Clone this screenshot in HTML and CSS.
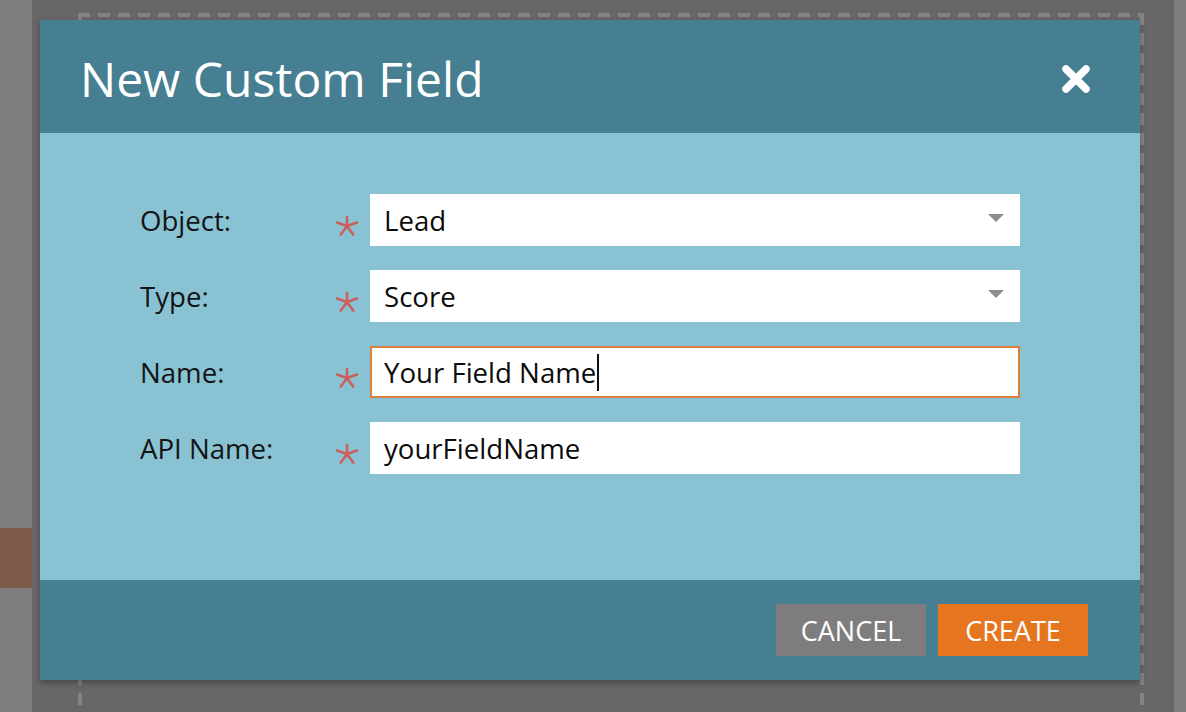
FILE: index.html
```html
<!DOCTYPE html>
<html lang="en">
<head>
<meta charset="utf-8">
<title>New Custom Field</title>
<link rel="stylesheet" href="styles.css">
</head>
<body>
<div class="page">
  <aside class="sidebar"><div class="sidebar-mark"></div></aside>
  <main class="canvas"><div class="frame"></div></main>
  <aside class="rightbar"></aside>
</div>

<div class="modal" role="dialog" aria-labelledby="dlg-title">
  <header class="modal-header">
    <h1 id="dlg-title" class="modal-title">New Custom Field</h1>
    <button class="close" aria-label="Close">
      <svg width="30" height="30" viewBox="0 0 30 30"><path d="M5 5 L25 25 M25 5 L5 25" stroke="#fff" stroke-width="7.5" stroke-linecap="round"/></svg>
    </button>
  </header>
  <section class="modal-body">
    <div class="form">
      <div class="label">Object:</div>
      <div class="req"><svg class="star" width="24" height="22" viewBox="0 0 24 22"><path d="M12 2 V11 M12 11 L22 7.6 M12 11 L2 7.6 M12 11 L18.2 19.6 M12 11 L5.8 19.6" stroke="#c9605e" stroke-width="2.6" stroke-linecap="round"/></svg></div>
      <div class="field select">Lead<span class="caret"></span></div>

      <div class="label">Type:</div>
      <div class="req"><svg class="star" width="24" height="22" viewBox="0 0 24 22"><path d="M12 2 V11 M12 11 L22 7.6 M12 11 L2 7.6 M12 11 L18.2 19.6 M12 11 L5.8 19.6" stroke="#c9605e" stroke-width="2.6" stroke-linecap="round"/></svg></div>
      <div class="field select">Score<span class="caret"></span></div>

      <div class="label">Name:</div>
      <div class="req"><svg class="star" width="24" height="22" viewBox="0 0 24 22"><path d="M12 2 V11 M12 11 L22 7.6 M12 11 L2 7.6 M12 11 L18.2 19.6 M12 11 L5.8 19.6" stroke="#c9605e" stroke-width="2.6" stroke-linecap="round"/></svg></div>
      <div class="field focused"><span class="typed">Your Field Name</span><span class="cursor"></span></div>

      <div class="label">API Name:</div>
      <div class="req"><svg class="star" width="24" height="22" viewBox="0 0 24 22"><path d="M12 2 V11 M12 11 L22 7.6 M12 11 L2 7.6 M12 11 L18.2 19.6 M12 11 L5.8 19.6" stroke="#c9605e" stroke-width="2.6" stroke-linecap="round"/></svg></div>
      <div class="field">yourFieldName</div>
    </div>
  </section>
  <footer class="modal-footer">
    <button class="btn btn-cancel">CANCEL</button>
    <button class="btn btn-create">CREATE</button>
  </footer>
</div>
</body>
</html>
```

FILE: styles.css
```css
* { box-sizing: border-box; }

html, body {
  margin: 0;
  padding: 0;
  width: 1186px;
  height: 712px;
  overflow: hidden;
  background: #686668;
  font-family: "Open Sans", "Noto Sans", sans-serif;
}

.page {
  display: flex;
  height: 712px;
}

.sidebar {
  width: 32px;
  flex: none;
  background: #7f7e7f;
  padding-top: 528px;
}

.sidebar-mark {
  height: 60px;
  background: #7e5a4b;
}

.canvas {
  flex: 1;
  padding: 13px 30px 0 46px;
}

.frame {
  height: 100%;
  background:
    repeating-linear-gradient(90deg, #858385 0 12px, transparent 12px 20px) left top / 100% 4px no-repeat,
    repeating-linear-gradient(180deg, #858385 0 12px, transparent 12px 20px) left top / 4px 100% no-repeat,
    repeating-linear-gradient(180deg, #858385 0 12px, transparent 12px 20px) right top / 4px 100% no-repeat;
}

.rightbar {
  width: 12px;
  flex: none;
  background: #7f7e7f;
}

/* Modal overlay */
.modal {
  position: absolute;
  left: 40px;
  top: 20px;
  width: 1100px;
  display: flex;
  flex-direction: column;
  box-shadow: 0 3px 6px rgba(0, 0, 0, 0.3);
}

.modal-header {
  height: 113px;
  background: #467f92;
  display: flex;
  align-items: center;
  justify-content: space-between;
  padding: 5px 49px 0 40px;
}

.modal-title {
  margin: 0;
  font-weight: 400;
  font-size: 48px;
  line-height: 48px;
  color: #ffffff;
}

.close {
  border: 0;
  padding: 0;
  margin-top: 0;
  background: transparent;
  width: 30px;
  height: 30px;
  display: flex;
}

.modal-body {
  height: 447px;
  background: #89c3d3;
  padding: 61px 0 0 100px;
}

.form {
  display: grid;
  grid-template-columns: 195px 35px 650px;
  grid-auto-rows: 52px;
  row-gap: 24px;
  align-items: center;
}

.label {
  font-size: 27.6px;
  color: #141414;
}

.req {
  display: flex;
  align-items: center;
  height: 52px;
  padding-top: 12px;
}

.field {
  position: relative;
  height: 52px;
  background: #ffffff;
  display: flex;
  align-items: center;
  padding: 0 14px 0 14px;
  font-size: 27.6px;
  color: #0c0c0c;
}

.field.focused {
  border: 2px solid #d8823c;
  padding-left: 12px;
}

.cursor {
  display: inline-block;
  width: 2px;
  height: 37px;
  background: #111;
  margin-left: 1px;
}

.caret {
  position: absolute;
  right: 16px;
  top: 20px;
  width: 0;
  height: 0;
  border-left: 8px solid transparent;
  border-right: 8px solid transparent;
  border-top: 8px solid #8d8d8d;
}

.modal-footer {
  height: 100px;
  background: #467f92;
  display: flex;
  justify-content: flex-end;
  align-items: center;
  gap: 12px;
  padding-right: 52px;
}

.btn {
  width: 150px;
  height: 52px;
  border: 0;
  padding: 0;
  font-family: "Open Sans", "Noto Sans", sans-serif;
  font-size: 27px;
  color: #ffffff;
  display: flex;
  align-items: center;
  justify-content: center;
}

.btn-cancel { background: #7f7c7e; }
.btn-create { background: #e5761f; }
```
